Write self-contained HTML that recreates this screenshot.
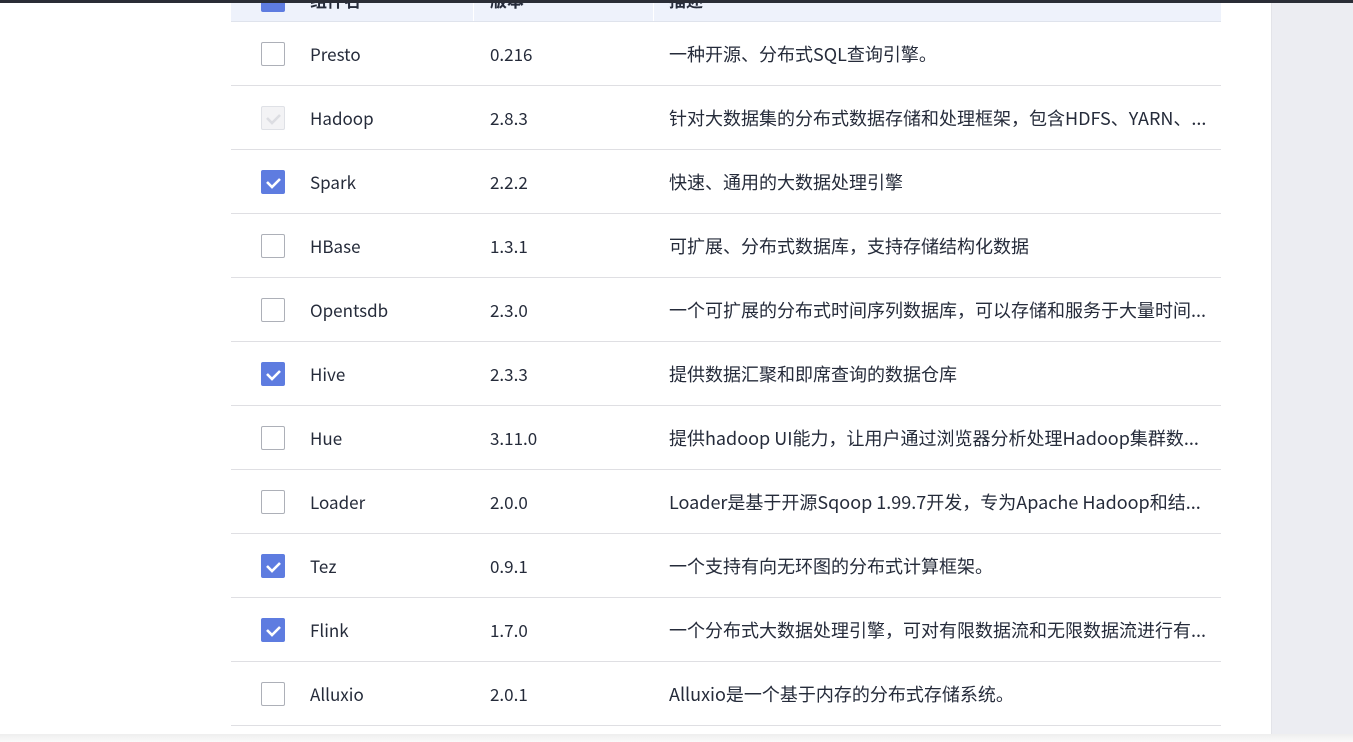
<!DOCTYPE html>
<html><head><meta charset="utf-8"><style>
*{margin:0;padding:0;box-sizing:border-box}
body{width:1353px;height:742px;overflow:hidden;background:#fff;font-family:"Noto Sans CJK SC","Liberation Sans",sans-serif;color:#252b3a;position:relative}
.topbar{position:absolute;left:0;top:0;width:1353px;height:3px;background:#2a2d36;z-index:5}
.right{position:absolute;left:1271px;top:0;width:82px;height:742px;background:#ecedf2;border-left:1px solid #e3e4e9}
.bottom{position:absolute;left:0;top:734px;width:1353px;height:8px;background:linear-gradient(#eee,#fafafa)}
.head{position:absolute;left:231px;top:0;width:990px;height:22px;background:#eef2fb;border-bottom:1px solid #dfe3ec;overflow:hidden}
.head span{position:absolute;top:-12px;line-height:24px;font-weight:bold;font-size:17px;color:#252b3a}
.head i{position:absolute;top:0;width:1px;height:22px;background:#fff}
.hcb{position:absolute;left:30px;top:-12px;width:24px;height:24px;background:#5e7ce0;border-radius:2px}
.row{position:absolute;left:231px;width:990px;height:64px;border-bottom:1px solid #dfdfe3;font-size:17px}
.row span{position:absolute;top:20px;line-height:24px;white-space:nowrap}
.row span.d{font-size:18px}
.cb{position:absolute;left:30px;top:20px;width:24px;height:24px;border:1px solid #adb0b8;border-radius:2px;background:#fff}
.cb.on{background:#5e7ce0;border-color:#5e7ce0}
.cb.dis{background:#f3f3f5;border-color:#dfe1e6}
.cb svg{position:absolute;left:2px;top:3px}
</style></head><body>
<div class="topbar"></div>
<div class="head"><div class="hcb"></div><span style="left:79px">组件名</span><i style="left:242px"></i><span style="left:259px">版本</span><i style="left:422px"></i><span style="left:438px">描述</span></div>
<div class="row" style="top:22px"><div class="cb"></div><span style="left:79px">Presto</span><span style="left:259px">0.216</span><span class="d" style="left:438px">一种开源、分布式SQL查询引擎。</span></div>
<div class="row" style="top:86px"><div class="cb dis"><svg width="18" height="16" viewBox="0 0 18 16"><path d="M3 8l5 5 8-8" stroke="#dcdde2" stroke-width="2.6" fill="none"/></svg></div><span style="left:79px">Hadoop</span><span style="left:259px">2.8.3</span><span class="d" style="left:438px">针对大数据集的分布式数据存储和处理框架，包含HDFS、YARN、...</span></div>
<div class="row" style="top:150px"><div class="cb on"><svg width="18" height="16" viewBox="0 0 18 16"><path d="M3 8l5 5 8-8" stroke="#fff" stroke-width="2.6" fill="none"/></svg></div><span style="left:79px">Spark</span><span style="left:259px">2.2.2</span><span class="d" style="left:438px">快速、通用的大数据处理引擎</span></div>
<div class="row" style="top:214px"><div class="cb"></div><span style="left:79px">HBase</span><span style="left:259px">1.3.1</span><span class="d" style="left:438px">可扩展、分布式数据库，支持存储结构化数据</span></div>
<div class="row" style="top:278px"><div class="cb"></div><span style="left:79px">Opentsdb</span><span style="left:259px">2.3.0</span><span class="d" style="left:438px">一个可扩展的分布式时间序列数据库，可以存储和服务于大量时间...</span></div>
<div class="row" style="top:342px"><div class="cb on"><svg width="18" height="16" viewBox="0 0 18 16"><path d="M3 8l5 5 8-8" stroke="#fff" stroke-width="2.6" fill="none"/></svg></div><span style="left:79px">Hive</span><span style="left:259px">2.3.3</span><span class="d" style="left:438px">提供数据汇聚和即席查询的数据仓库</span></div>
<div class="row" style="top:406px"><div class="cb"></div><span style="left:79px">Hue</span><span style="left:259px">3.11.0</span><span class="d" style="left:438px">提供hadoop UI能力，让用户通过浏览器分析处理Hadoop集群数...</span></div>
<div class="row" style="top:470px"><div class="cb"></div><span style="left:79px">Loader</span><span style="left:259px">2.0.0</span><span class="d" style="left:438px">Loader是基于开源Sqoop 1.99.7开发，专为Apache Hadoop和结...</span></div>
<div class="row" style="top:534px"><div class="cb on"><svg width="18" height="16" viewBox="0 0 18 16"><path d="M3 8l5 5 8-8" stroke="#fff" stroke-width="2.6" fill="none"/></svg></div><span style="left:79px">Tez</span><span style="left:259px">0.9.1</span><span class="d" style="left:438px">一个支持有向无环图的分布式计算框架。</span></div>
<div class="row" style="top:598px"><div class="cb on"><svg width="18" height="16" viewBox="0 0 18 16"><path d="M3 8l5 5 8-8" stroke="#fff" stroke-width="2.6" fill="none"/></svg></div><span style="left:79px">Flink</span><span style="left:259px">1.7.0</span><span class="d" style="left:438px">一个分布式大数据处理引擎，可对有限数据流和无限数据流进行有...</span></div>
<div class="row" style="top:662px"><div class="cb"></div><span style="left:79px">Alluxio</span><span style="left:259px">2.0.1</span><span class="d" style="left:438px">Alluxio是一个基于内存的分布式存储系统。</span></div>
<div class="right"></div>
<div class="bottom"></div>
</body></html>
